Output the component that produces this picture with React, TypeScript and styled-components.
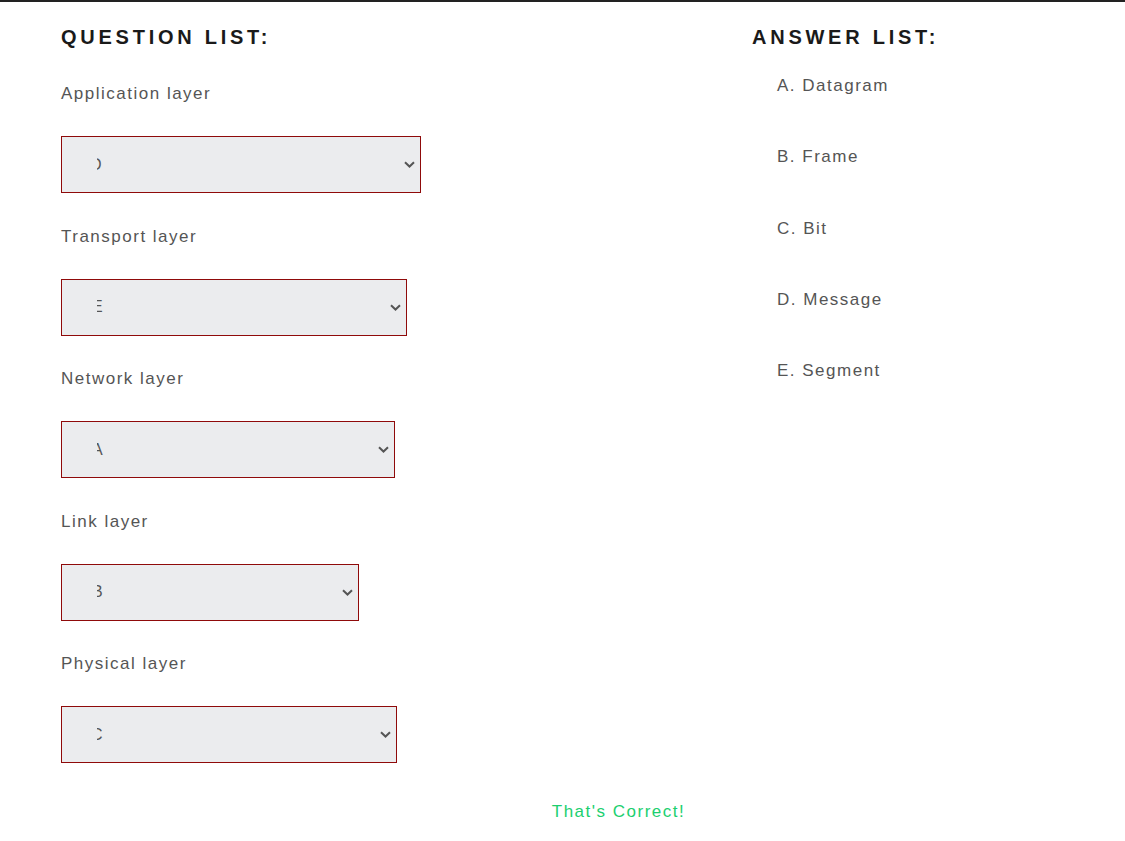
import React from "react";
import styled, { createGlobalStyle } from "styled-components";

const GlobalStyle = createGlobalStyle`
  html, body { margin: 0; padding: 0; background: #fff; }
  body { font-family: "Liberation Sans", Arial, sans-serif; }
`;

const Page = styled.div`
  border-top: 2px solid #222;
  min-height: 839px;
  box-sizing: border-box;
`;

const Columns = styled.div`
  display: grid;
  grid-template-columns: 691px 1fr;
  padding-left: 61px;
  padding-top: 25px;
`;

const Heading = styled.h2`
  margin: 0;
  font-size: 20px;
  line-height: 20px;
  font-weight: 700;
  letter-spacing: 3.75px;
  color: #1a1a1a;
`;

const QuestionList = styled.div`
  display: flex;
  flex-direction: column;
`;

const Question = styled.div`
  display: flex;
  flex-direction: column;
  align-items: flex-start;
  padding-top: 37px;
  & + & {
    padding-top: 33.5px;
  }
`;

const Label = styled.div`
  font-size: 17px;
  line-height: 20px;
  letter-spacing: 1.5px;
  color: #555;
`;

const SelectBox = styled.div<{ $w: number }>`
  margin-top: 32px;
  width: ${(p) => p.$w}px;
  height: 57px;
  box-sizing: border-box;
  border: 1px solid #8f0a0a;
  background: #ebecee;
  display: flex;
  align-items: center;
  padding-left: 35px;
  padding-right: 5px;
`;

const Clip = styled.span`
  flex: 1;
  overflow: hidden;
  white-space: nowrap;
  font-size: 16px;
  color: #555;
  line-height: 20px;
`;

const Value = styled.span<{ $shift: number }>`
  display: inline-block;
  margin-left: ${(p) => p.$shift}px;
`;

const Chevron = styled.svg`
  width: 11px;
  height: 7px;
  flex: none;
`;

const AnswerColumn = styled.div`
  display: flex;
  flex-direction: column;
`;

const AnswerList = styled.ol`
  list-style: none;
  margin: 0;
  padding: 29px 0 0 25px;
  display: flex;
  flex-direction: column;
  gap: 51.3px;
`;

const Answer = styled.li`
  font-size: 17px;
  line-height: 20px;
  letter-spacing: 1.5px;
  color: #555;
`;

const Footer = styled.div`
  display: flex;
  justify-content: center;
  padding: 39px 0 0 112px;
`;

const Correct = styled.div`
  font-size: 17px;
  line-height: 20px;
  letter-spacing: 1.5px;
  color: #1ccf6f;
`;

const questions = [
  { label: "Application layer", value: "D", width: 360, shift: -7 },
  { label: "Transport layer", value: "E", width: 346, shift: -5 },
  { label: "Network layer", value: "A", width: 334, shift: -5 },
  { label: "Link layer", value: "B", width: 298, shift: -5 },
  { label: "Physical layer", value: "C", width: 336, shift: -6 },
];

const answers = ["A. Datagram", "B. Frame", "C. Bit", "D. Message", "E. Segment"];

export default function App() {
  return (
    <>
      <GlobalStyle />
      <Page>
        <Columns>
          <QuestionList>
            <Heading>QUESTION LIST:</Heading>
            {questions.map((q) => (
              <Question key={q.label}>
                <Label>{q.label}</Label>
                <SelectBox $w={q.width}>
                  <Clip>
                    <Value $shift={q.shift}>{q.value}</Value>
                  </Clip>
                  <Chevron viewBox="0 0 11 7">
                    <path d="M1 1.2 L5.5 5.5 L10 1.2" fill="none" stroke="#555" strokeWidth="2" />
                  </Chevron>
                </SelectBox>
              </Question>
            ))}
          </QuestionList>
          <AnswerColumn>
            <Heading>ANSWER LIST:</Heading>
            <AnswerList>
              {answers.map((a) => (
                <Answer key={a}>{a}</Answer>
              ))}
            </AnswerList>
          </AnswerColumn>
        </Columns>
        <Footer>
          <Correct>That's Correct!</Correct>
        </Footer>
      </Page>
    </>
  );
}
